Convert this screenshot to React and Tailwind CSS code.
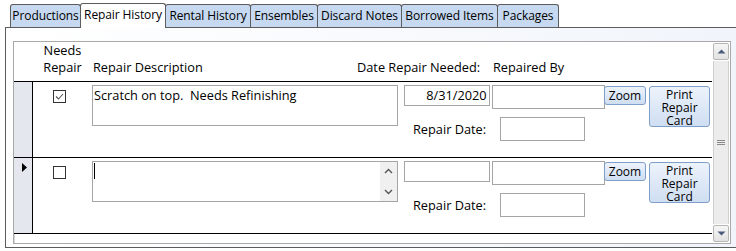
import React from "react";

const tabs = [
  { label: "Productions", w: "w-[71px]" },
  { label: "Repair History", w: "w-[86px]", active: true },
  { label: "Rental History", w: "w-[86px]" },
  { label: "Ensembles", w: "w-[68px]" },
  { label: "Discard Notes", w: "w-[85px]" },
  { label: "Borrowed Items", w: "w-[97px]" },
  { label: "Packages", w: "w-[62px]" },
];

const records = [
  {
    checked: true,
    description: "Scratch on top.  Needs Refinishing",
    needed: "8/31/2020",
  },
  { checked: false, description: "", needed: "", current: true },
];

function Checkbox({ checked }) {
  return (
    <div className="flex h-[13px] w-[13px] items-center justify-center border border-[#333] bg-white">
      {checked && (
        <svg width="11" height="11" viewBox="0 0 11 11">
          <path d="M2 5.5 L4.5 8 L9 3" fill="none" stroke="#555" strokeWidth="1.1" />
        </svg>
      )}
    </div>
  );
}

function Chevron({ down }) {
  return (
    <svg width="9" height="6" viewBox="0 0 9 6">
      <path
        d={down ? "M1 1 L4.5 4.5 L8 1" : "M1 5 L4.5 1.5 L8 5"}
        fill="none"
        stroke="#555"
        strokeWidth="1.4"
      />
    </svg>
  );
}

function AccessButton({ className, children }) {
  return (
    <div
      className={`flex items-start justify-center rounded-[3px] border border-[#7f9fca] bg-gradient-to-b from-[#edf3fb] to-[#cfdef2] text-center text-[12px] text-black ${className}`}
    >
      {children}
    </div>
  );
}

function RecordRow({ record }) {
  return (
    <div className="flex h-[76px] border-b border-black">
      <div className="w-[19px] shrink-0 border-r border-black bg-[#e4e8ee]">
        {record.current && (
          <svg width="19" height="14" viewBox="0 0 19 14" className="mt-[5px]">
            <path d="M8 0 L13 4.5 L8 9 Z" fill="#000" />
          </svg>
        )}
      </div>
      <div className="w-[59px] shrink-0 pl-[20px] pt-[8px]">
        <Checkbox checked={record.checked} />
      </div>
      <div className="mt-[3px] flex h-[41px] w-[306px] shrink-0 border border-[#a5a5a5] bg-white">
        {record.description ? (
          <div className="flex-1 whitespace-pre pl-[1px] pt-[1px] leading-[17px]">{record.description}</div>
        ) : (
          <>
            <div className="flex-1 pl-[1px] pt-[1px]">
              <div className="h-[16px] w-px bg-black" />
            </div>
            <div className="flex w-[17px] flex-col items-center justify-between bg-[#f0f0f0] py-[6px]">
              <Chevron />
              <Chevron down />
            </div>
          </>
        )}
      </div>
      <div className="ml-[6px] mt-[3px] flex">
        <div className="w-[201px]">
          <div className="flex h-[24px] items-start">
            <div className="h-[21px] w-[86px] border border-[#a5a5a5] bg-white pr-[2px] text-right leading-[19px]">
              {record.needed}
            </div>
            <div className="ml-[2px] h-[24px] w-[114px] border border-[#a5a5a5] bg-white" />
          </div>
          <div className="mt-[8px] flex items-center">
            <div className="ml-[9px] w-[87px] leading-[17px]">Repair Date:</div>
            <div className="h-[24px] w-[85px] border border-[#a5a5a5] bg-white" />
          </div>
        </div>
        <AccessButton className="relative z-10 ml-[-1px] mt-[1px] h-[19px] w-[42px] leading-[17px]">Zoom</AccessButton>
        <AccessButton className="ml-[3px] mt-[1px] h-[41px] w-[61px] leading-[13px]">
          <div className="pt-[1px]">
            Print
            <br />
            Repair
            <br />
            Card
          </div>
        </AccessButton>
      </div>
    </div>
  );
}

function ScrollButton({ down }) {
  return (
    <div className="flex h-[17px] items-center justify-center rounded-[2px] border border-[#b7b7b7] bg-gradient-to-b from-[#f6f6f6] to-[#e2e2e2]">
      <svg width="9" height="5" viewBox="0 0 9 5">
        <path d={down ? "M0.5 0.5 L8.5 0.5 L4.5 4.5 Z" : "M0.5 4.5 L8.5 4.5 L4.5 0.5 Z"} fill="#4a5b7c" />
      </svg>
    </div>
  );
}

export default function App() {
  return (
    <div
      className="h-[251px] w-[736px] overflow-hidden bg-white pt-[3px] text-[12.75px] text-black"
      style={{ fontFamily: '"Open Sans", "Noto Sans", sans-serif' }}
    >
      <div className="relative z-10 -mb-px flex h-[25px] items-end pl-[10px] text-[12px]">
        {tabs.map((tab, i) =>
          tab.active ? (
            <div
              key={tab.label}
              className={`${tab.w} ${i ? "-ml-px" : ""} relative z-10 flex h-[25px] items-start justify-center rounded-t-[3px] border-x border-t border-[#5c5c5c] bg-white pt-[2px] leading-[17px] tracking-[-0.1px]`}
            >
              {tab.label}
            </div>
          ) : (
            <div
              key={tab.label}
              className={`${tab.w} ${i ? "-ml-px" : ""} mb-px flex h-[23px] items-start justify-center rounded-t-[3px] border-x border-t border-[#5c5c5c] bg-[#c6d9f0] pt-[2px] leading-[17px] tracking-[-0.1px]`}
            >
              {tab.label}
            </div>
          )
        )}
      </div>
      <div className="ml-[5px] h-[221px] border-y border-l border-[#5c5c5c] bg-gradient-to-r from-white to-[#f1f5fb] pl-[7px] pt-[13px]">
        <div className="flex h-[203px] w-[718px] border border-[#a9a9a9] bg-white">
          <div className="w-[698px]">
            <div className="flex h-[40px] border-b border-black">
              <div className="w-[19px]" />
              <div className="w-[59px] text-center leading-[17px]">
                Needs
                <br />
                Repair
              </div>
              <div className="w-[265px] pl-[1px] pt-[17px] leading-[17px]">Repair Description</div>
              <div className="w-[136px] pt-[17px] leading-[17px]">Date Repair Needed:</div>
              <div className="pt-[17px] leading-[17px]">Repaired By</div>
            </div>
            {records.map((record, i) => (
              <RecordRow key={i} record={record} />
            ))}
            <div className="h-[9px] border-l border-[#d8d8d8]" />
          </div>
          <div className="ml-[1px] flex w-[16px] flex-col py-px">
            <ScrollButton />
            <div className="my-px flex flex-1 items-center justify-center border-x border-[#cfcfcf] bg-[#ececec]">
              <svg width="8" height="6" viewBox="0 0 8 6">
                <path d="M0 0.5 H8 M0 2.5 H8 M0 4.5 H8" stroke="#8a8a8a" strokeWidth="1" />
              </svg>
            </div>
            <ScrollButton down />
          </div>
        </div>
      </div>
    </div>
  );
}
